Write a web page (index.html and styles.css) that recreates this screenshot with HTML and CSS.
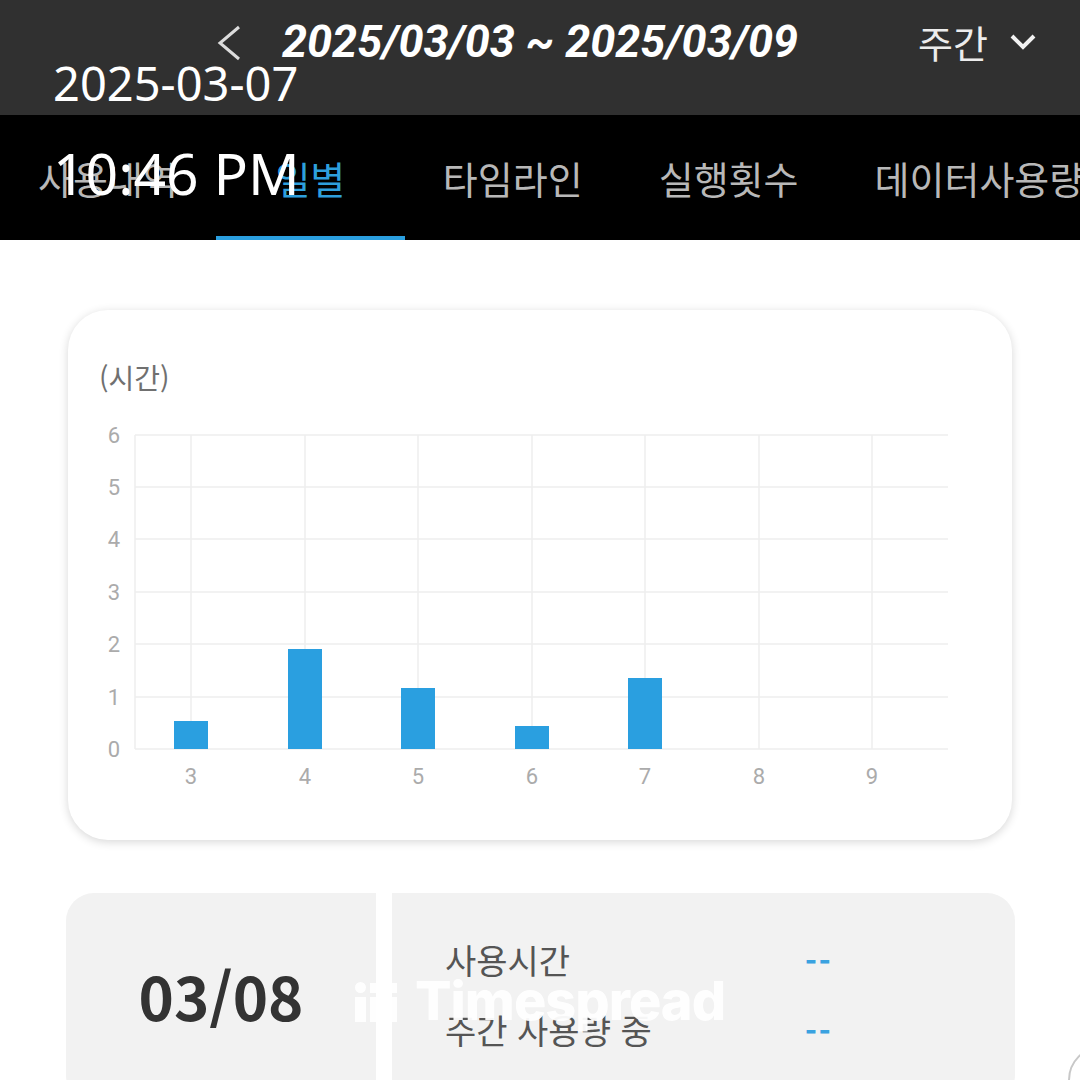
FILE: index.html
```html
<!DOCTYPE html>
<html lang="ko">

<head>
    <meta charset="UTF-8">
    <meta name="viewport" content="width=device-width, initial-scale=1.0">
    <title>일별 사용내역</title>
    <link rel="stylesheet" href="styles.css">
</head>

<body>
    <div class="top">
        <svg class="prev" width="34" height="44" viewBox="0 0 34 44">
            <polyline points="27,7 8,23 27,39" fill="none" stroke="#dcdcdc" stroke-width="3" />
        </svg>
        <div class="range">2025/03/03 ~ 2025/03/09</div>
        <div class="period">주간</div>
        <svg class="drop" width="30" height="24" viewBox="0 0 30 24">
            <polyline points="4,6 15,17 26,6" fill="none" stroke="#f2f2f2" stroke-width="4" />
        </svg>
    </div>

    <div class="tabs">
        <div class="tab">사용내역</div>
        <div class="tab active">일별</div>
        <div class="tab">타임라인</div>
        <div class="tab">실행횟수</div>
        <div class="tab">데이터사용량</div>
    </div>

    <div class="card">
        <div class="unit">(시간)</div>
        <svg class="chart" width="944" height="390" viewBox="0 0 944 390">
            <g stroke="#eeeeee" stroke-width="1.5">
                <line x1="67" y1="25" x2="880" y2="25" />
                <line x1="67" y1="77" x2="880" y2="77" />
                <line x1="67" y1="129" x2="880" y2="129" />
                <line x1="67" y1="182" x2="880" y2="182" />
                <line x1="67" y1="234" x2="880" y2="234" />
                <line x1="67" y1="287" x2="880" y2="287" />
                <line x1="67" y1="339" x2="880" y2="339" />
                <line x1="67" y1="25" x2="67" y2="339" />
                <line x1="123" y1="25" x2="123" y2="339" />
                <line x1="237" y1="25" x2="237" y2="339" />
                <line x1="350" y1="25" x2="350" y2="339" />
                <line x1="464" y1="25" x2="464" y2="339" />
                <line x1="577" y1="25" x2="577" y2="339" />
                <line x1="691" y1="25" x2="691" y2="339" />
                <line x1="804" y1="25" x2="804" y2="339" />
            </g>
            <g class="axis" text-anchor="middle">
                <text x="46" y="33">6</text>
                <text x="46" y="85">5</text>
                <text x="46" y="137">4</text>
                <text x="46" y="190">3</text>
                <text x="46" y="242">2</text>
                <text x="46" y="295">1</text>
                <text x="46" y="347">0</text>
                <text x="123" y="374">3</text>
                <text x="237" y="374">4</text>
                <text x="350" y="374">5</text>
                <text x="464" y="374">6</text>
                <text x="577" y="374">7</text>
                <text x="691" y="374">8</text>
                <text x="804" y="374">9</text>
            </g>
            <g fill="#2a9fe0">
                <rect x="106" y="311" width="34" height="28" />
                <rect x="220" y="239" width="34" height="100" />
                <rect x="333" y="278" width="34" height="61" />
                <rect x="447" y="316" width="34" height="23" />
                <rect x="560" y="268" width="34" height="71" />
            </g>
        </svg>
    </div>

    <div class="summary">
        <div class="day">03/08</div>
        <div class="info">
            <div class="label">사용시간</div>
            <div class="value">--</div>
            <div class="label">주간 사용량 중</div>
            <div class="value">--</div>
        </div>
    </div>

    <!-- overlays -->
    <div class="stamp-date">2025-03-07</div>
    <div class="stamp-time">10:46 PM</div>
    <div class="mark">
        <svg width="44" height="80" viewBox="0 0 44 80">
            <circle cx="5.5" cy="27.5" r="5.5" />
            <rect x="0" y="37" width="11" height="25" />
            <rect x="22" y="0" width="15" height="80" />
            <rect x="15" y="23" width="27" height="10" />
            <rect x="15" y="37" width="27" height="25" />
        </svg>
        <span>Timespread</span>
    </div>
    <div class="fab"></div>
</body>

</html>
```

FILE: styles.css
```css
body {
    margin: 0;
    width: 1080px;
    height: 1080px;
    overflow: hidden;
    position: relative;
    background: #ffffff;
    font-family: "Noto Sans CJK KR", "Noto Sans", sans-serif;
}

.top {
    height: 115px;
    box-sizing: border-box;
    padding: 12px 42px 0 212px;
    background: #303030;
    display: flex;
    align-items: flex-start;
}

.prev {
    margin-top: 8px;
}

.range {
    margin-left: 36px;
    font-family: Roboto, "Liberation Sans", sans-serif;
    font-style: italic;
    font-weight: bold;
    font-size: 45px;
    line-height: 60px;
    color: #ffffff;
}

.period {
    margin-left: auto;
    font-size: 38px;
    line-height: 60px;
    color: #ececec;
}

.drop {
    margin: 18px 0 0 20px;
}

.tabs {
    height: 125px;
    background: #000000;
    display: flex;
    align-items: stretch;
    overflow: hidden;
}

.tab {
    flex: none;
    min-width: 189px;
    padding: 4px 38px 0 38px;
    display: flex;
    align-items: center;
    justify-content: center;
    font-size: 38px;
    color: #b8b8b8;
    white-space: nowrap;
    box-sizing: border-box;
    border-bottom: 4px solid transparent;
}

.tab.active {
    color: #2e9fdc;
    border-bottom-color: #2a9fe0;
}

.card {
    margin: 70px 68px 0 68px;
    height: 530px;
    box-sizing: border-box;
    padding-top: 47px;
    border-radius: 40px;
    background: #ffffff;
    box-shadow: 0 2px 10px rgba(0, 0, 0, 0.16);
}

.unit {
    padding-left: 31px;
    font-size: 28px;
    line-height: 40px;
    color: #707070;
}

.chart {
    display: block;
    margin-top: 13px;
}

.axis {
    font-family: Roboto, "Liberation Sans", sans-serif;
    font-size: 22px;
    fill: #ababab;
}

.summary {
    margin: 53px 65px 0 66px;
    height: 210px;
    display: flex;
    gap: 16px;
    border-radius: 28px;
    overflow: hidden;
}

.day {
    width: 310px;
    background: #f2f2f2;
    display: flex;
    justify-content: center;
    padding-top: 60px;
    box-sizing: border-box;
    font-size: 60px;
    line-height: 84px;
    font-weight: bold;
    color: #333333;
}

.info {
    flex: 1;
    background: #f2f2f2;
    box-sizing: border-box;
    padding: 45px 0 0 53px;
    display: grid;
    grid-template-columns: 360px auto;
    grid-auto-rows: 44px;
    row-gap: 26px;
    align-content: start;
}

.label {
    font-size: 34px;
    line-height: 44px;
    color: #555555;
}

.value {
    font-size: 32px;
    line-height: 44px;
    font-weight: bold;
    letter-spacing: 2px;
    color: #3aa2e0;
}

.stamp-date,
.stamp-time {
    position: absolute;
    left: 53px;
    font-family: "Noto Sans", sans-serif;
    color: #ffffff;
}

.stamp-date {
    top: 50px;
    font-size: 47px;
    line-height: 66px;
}

.stamp-time {
    top: 132px;
    font-size: 57px;
    line-height: 82px;
}

.mark {
    position: absolute;
    left: 355px;
    top: 960px;
    display: flex;
    align-items: center;
    gap: 16px;
    fill: #ffffff;
    color: #ffffff;
    opacity: 0.95;
}

.mark span {
    font-family: Inter, sans-serif;
    font-weight: 800;
    font-size: 54px;
    letter-spacing: -1px;
}

.fab {
    position: absolute;
    left: 1068px;
    top: 1046px;
    width: 64px;
    height: 64px;
    border: 2px solid #c8c8c8;
    border-radius: 50%;
    background: #ffffff;
}
```
